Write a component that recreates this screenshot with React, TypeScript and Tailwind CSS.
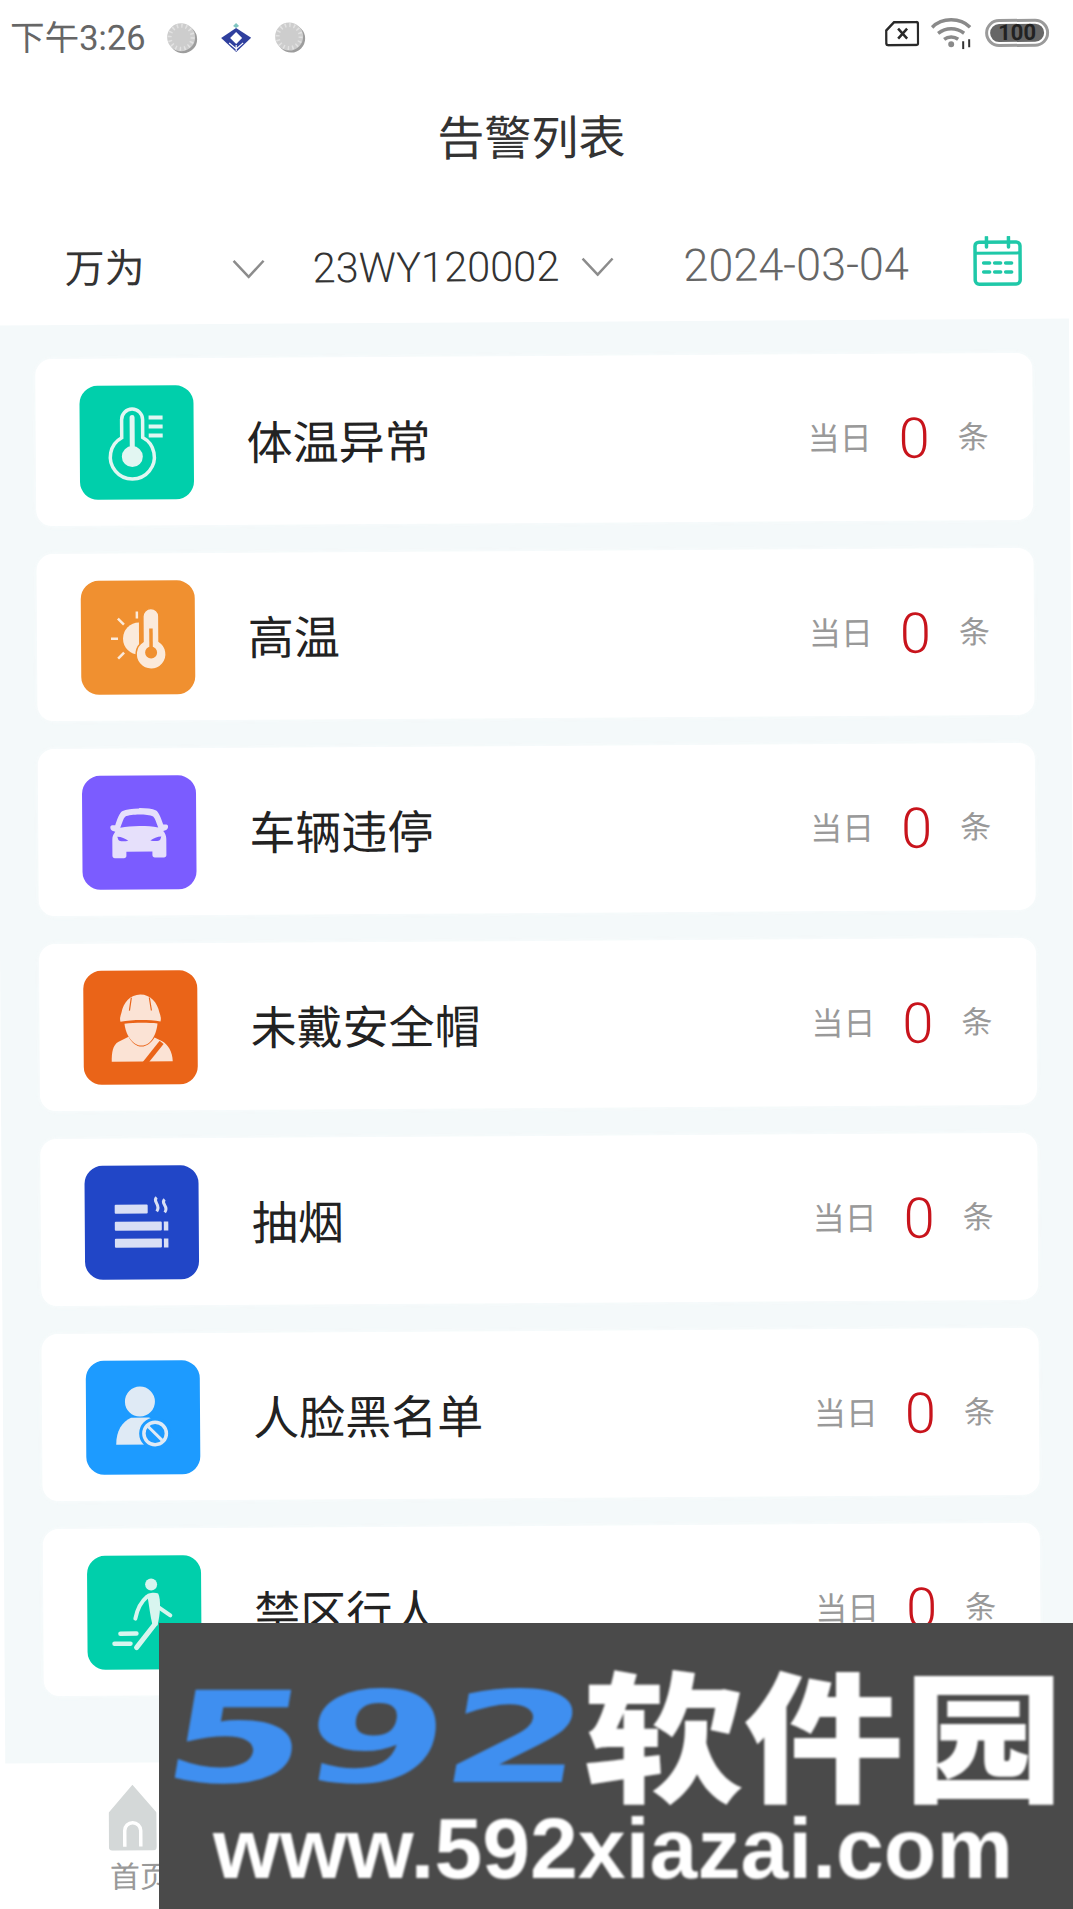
import type { ReactNode } from 'react';

const PALE = '#e2f6f2';

function TempIcon() {
  return (
    <svg viewBox="0 0 114 114" className="h-full w-full" fill="none">
      <path d="M42 52V34a10.500 10.500 0 0 1 21 0v18a22 22 0 1 1-21 0z" stroke={PALE} strokeWidth="3.500" />
      <path d="M52.500 32v34" stroke={PALE} strokeWidth="5" strokeLinecap="round" />
      <circle cx="52.500" cy="71" r="10.500" fill={PALE} />
      <path d="M69 32h14M69 41h14M69 50h14" stroke={PALE} strokeWidth="4" />
    </svg>
  );
}

function HeatIcon() {
  const c = '#fbeadb';
  return (
    <svg viewBox="0 0 114 114" className="h-full w-full" fill="none">
      <path d="M58 42a16 16 0 0 0 0 32z" fill={c} />
      <path d="M56 31v7M37 38l6 6M30 58h7M37 78l6-6" stroke={c} strokeWidth="2.500" />
      <path d="M62 36a8 8 0 0 1 16 0v25a15 15 0 1 1-16 0z" fill={c} stroke="#f09030" strokeWidth="1.500" />
      <path d="M70 48v22" stroke="#f09030" strokeWidth="3.500" />
      <circle cx="70" cy="72" r="6" fill="#f09030" />
    </svg>
  );
}

function CarIcon() {
  const bg = '#7b5cff';
  return (
    <svg viewBox="0 0 114 114" className="h-full w-full">
      <path
        d="M57 33c-7 0-13 .7-17 2.500-2.500 1.500-5 8-7 14h-3c-2.500 0-2.500 4 0 5.500l3 1c-2 2.500-3 5-3 8v16c0 1.500 1 2.500 2.500 2.500h9c1.500 0 2.500-1 2.500-2.500V76h26v3.500c0 1.500 1 2.500 2.500 2.500h9c1.500 0 2.500-1 2.500-2.500v-16c0-3-1-5.500-3-8l3-1c2.500-1.500 2.500-5.500 0-5.500h-3c-2-6-4.500-12.500-7-14-4-1.800-10-2.500-17-2.500z"
        fill="#e6e0fb"
      />
      <path d="M38 52c2-5 3-9 5-11 3-1.500 9-2 14-2s11 .5 14 2c2 2 3 6 5 11-6-1-12-1.500-19-1.500s-13 .5-19 1.500z" fill={bg} />
      <path d="M35 61c4 0 8 2 11 4-4 1-9 1-10-1zM79 61c-4 0-8 2-11 4 4 1 9 1 10-1z" fill={bg} />
    </svg>
  );
}

function HelmetIcon() {
  const c = '#fbe3d5';
  const bg = '#ea6418';
  return (
    <svg viewBox="0 0 114 114" className="h-full w-full">
      <path d="M37 51c-1-3 0-6 1-9 2-10 9-18 19-18s17 8 19 18c1 3 2 6 1 9-12-2-28-2-40 0z" fill={c} />
      <path d="M48 27l-2 13M66 27l2 13" stroke={bg} strokeWidth="1.200" fill="none" />
      <path d="M41 53c10-1 23-1 33 0-1 11-7 22-16 22s-16-11-17-22z" fill={c} />
      <path d="M28 91c0-9 1-17 7-20l10-5c3 6 8 10 13 10 5 0 10-4 13-9l8 4c5 3 10 10 10 20z" fill={c} />
      <path d="M61 93l17-21" stroke={bg} strokeWidth="5" />
    </svg>
  );
}

function SmokeIcon() {
  const c = '#d9dff5';
  return (
    <svg viewBox="0 0 114 114" className="h-full w-full">
      <rect x="30" y="39" width="33" height="9" rx="1" fill={c} />
      <rect x="30" y="56" width="47" height="9" rx="1" fill={c} />
      <rect x="79" y="56" width="4.500" height="9" fill={c} />
      <rect x="30" y="73" width="47" height="9" rx="1" fill={c} />
      <rect x="79" y="73" width="4.500" height="9" fill={c} />
      <path d="M72 32c-5 4 5 7 0 14M80 34c-5 4 5 7 0 13" stroke={c} strokeWidth="3" fill="none" />
    </svg>
  );
}

function BlacklistIcon() {
  const c = '#dfeaf5';
  const bg = '#1d9bff';
  return (
    <svg viewBox="0 0 114 114" className="h-full w-full">
      <circle cx="54" cy="41" r="15" fill={c} />
      <path d="M30 84c0-14 6-23 15-27h18c8 3 13 9 15 17l-8 10z" fill={c} />
      <circle cx="69" cy="73" r="16" fill={bg} />
      <circle cx="69" cy="73" r="13" fill={c} />
      <circle cx="69" cy="73" r="9.500" fill={bg} />
      <path d="M62 66l14 14" stroke={c} strokeWidth="3" />
    </svg>
  );
}

function WalkIcon() {
  const c = '#d8f5ef';
  return (
    <svg viewBox="0 0 114 114" className="h-full w-full" fill="none">
      <circle cx="64" cy="29" r="6" fill={c} />
      <path d="M60 39c-1-1 7-3 11-1 3 6 2 22-1 32l-5-1c-2-8-3-18-5-30z" fill={c} />
      <path d="M60 41c-6 5-10 12-12 22" stroke={c} strokeWidth="4" strokeLinecap="round" />
      <path d="M70 51l13 9" stroke={c} strokeWidth="4" strokeLinecap="round" />
      <path d="M68 68L49 92" stroke={c} strokeWidth="5" strokeLinecap="round" />
      <path d="M33 78h16M27 88h16" stroke={c} strokeWidth="4.500" strokeLinecap="round" />
    </svg>
  );
}

const rows: { title: string; color: string; icon: ReactNode }[] = [
  { title: '体温异常', color: 'bg-[#00cfab]', icon: <TempIcon /> },
  { title: '高温', color: 'bg-[#f09030]', icon: <HeatIcon /> },
  { title: '车辆违停', color: 'bg-[#7b5cff]', icon: <CarIcon /> },
  { title: '未戴安全帽', color: 'bg-[#ea6418]', icon: <HelmetIcon /> },
  { title: '抽烟', color: 'bg-[#2146c7]', icon: <SmokeIcon /> },
  { title: '人脸黑名单', color: 'bg-[#1d9bff]', icon: <BlacklistIcon /> },
  { title: '禁区行人', color: 'bg-[#00cfab]', icon: <WalkIcon /> },
];

function Coin() {
  return (
    <svg viewBox="0 0 32 32" className="h-[32px] w-[32px]" fill="none">
      <circle cx="17" cy="17" r="14" fill="#9c9c9c" />
      <circle cx="15" cy="15" r="14" fill="#cdcdcd" />
      <circle cx="15" cy="15" r="11.500" stroke="#e2e2e2" strokeWidth="4" strokeDasharray="1.500 3" />
    </svg>
  );
}

function StatusBar() {
  return (
    <div className="flex h-[72px] items-center pl-[16px] pr-[18px]">
      <span className="text-[34.500px] text-[#666666]">下午3:26</span>
      <div className="ml-[20px] flex items-center gap-[22px]">
        <Coin />
        <svg viewBox="0 0 32 30" className="h-[30px] w-[32px]">
          <path d="M16 0l3 3-3 2-3-2z" fill="#7fc4c0" />
          <path d="M16 5l15 10-15 14L1 15z" fill="#2f3f9e" />
          <path d="M16 9l6 6-6 6-6-6z" fill="#ffffff" />
          <path d="M9 20l7 6 7-6M16 22v6" stroke="#ffffff" strokeWidth="1.200" fill="none" />
        </svg>
        <Coin />
      </div>
      <div className="ml-auto flex items-center gap-[12px]">
        <svg viewBox="0 0 34 26" className="h-[26px] w-[34px]" fill="none">
          <path d="M9 1.500h22a2 2 0 0 1 2 1.500v20a2 2 0 0 1-2 1.500H3a2 2 0 0 1-2-2V10z" stroke="#2a2a2a" strokeWidth="2.500" />
          <path d="M13 8l9 10M22 8l-9 10" stroke="#2a2a2a" strokeWidth="2.500" />
        </svg>
        <svg viewBox="0 0 42 32" className="h-[32px] w-[42px]" fill="none">
          <path d="M1 10c10-10 28-10 38 0M7 16c8-6 18-6 26 0M13 22c4-3 10-3 14 0" stroke="#8a8a8a" strokeWidth="3.500" />
          <circle cx="20" cy="27" r="3" fill="#8a8a8a" />
          <path d="M32 24v8M38 22v8" stroke="#333333" strokeWidth="2" />
        </svg>
        <div className="flex h-[28px] w-[64px] items-center rounded-full border-[3px] border-[#9a9a9a] p-[2px]">
          <div className="flex h-full w-full items-center justify-center rounded-full bg-[#666666] text-[22px] leading-none font-bold text-[#222222]">100</div>
        </div>
      </div>
    </div>
  );
}

function Chevron({ className }: { className: string }) {
  return (
    <svg viewBox="0 0 34 20" className={`h-[20px] w-[34px] ${className}`} fill="none">
      <path d="M2 2l15 16L32 2" stroke="#8c8c8c" strokeWidth="2.500" />
    </svg>
  );
}

function FilterBar() {
  return (
    <div className="flex h-[118px] items-center pt-[8px]">
      <span className="ml-[69px] text-[40px] text-[#333333]">万为</span>
      <Chevron className="ml-[87px]" />
      <span className="ml-[47px] text-[41.600px] font-light text-[#333333]">23WY120002</span>
      <Chevron className="ml-[21px]" />
      <span className="ml-[69px] text-[45px] font-light text-[#666666]">2024-03-04</span>
      <svg viewBox="0 0 50 50" className="-mt-[6px] ml-[64px] h-[50px] w-[50px]" fill="none">
        <rect x="2.500" y="6" width="45" height="42" rx="4" stroke="#1fc8a8" strokeWidth="3.500" />
        <path d="M2.500 17h45" stroke="#1fc8a8" strokeWidth="3" />
        <path d="M14 1v10M36 1v10" stroke="#1fc8a8" strokeWidth="3.500" strokeLinecap="round" />
        <path d="M11 27h6M22 27h6M33 27h6M11 36h6M22 36h6M33 36h6" stroke="#1fc8a8" strokeWidth="3.500" strokeLinecap="round" />
      </svg>
    </div>
  );
}

function AlarmRow({ title, color, icon }: { title: string; color: string; icon: ReactNode }) {
  return (
    <div className="flex h-[167px] items-center rounded-[16px] bg-white pl-[44px] pr-[44px] shadow-[0_0_5px_rgba(250,253,253,0.9)]">
      <div className={`h-[114px] w-[114px] shrink-0 rounded-[18px] ${color}`}>{icon}</div>
      <span className="ml-[53px] mt-[5px] text-[46px] text-[#222222]">{title}</span>
      <span className="ml-auto mt-[3px] text-[32px] text-[#999999]">当日</span>
      <span className="ml-[27px] mt-[3px] text-[56px] leading-none font-light text-[#c8141c]">0</span>
      <span className="ml-[28px] mt-[3px] text-[31px] text-[#999999]">条</span>
    </div>
  );
}

function Watermark() {
  return (
    <div className="absolute bottom-0 right-0 h-[286px] w-[914px] overflow-hidden bg-[#4a4a4a] font-['Liberation_Sans','Noto_Sans_CJK_SC',sans-serif]">
      <div className="flex h-full flex-col blur-[1.200px]">
        <div className="flex h-[190px] items-center pl-[8px] pt-[22px]">
          <span className="-ml-[12px] origin-bottom-left -skew-x-6 scale-x-[1.42] scale-y-[0.88] font-['DejaVu_Sans',sans-serif] text-[144px] leading-none font-bold tracking-[-2px] text-[#3f8ff0]">592</span>
          <span className="ml-[134px] scale-y-[0.88] font-['Noto_Sans_CJK_SC',sans-serif] text-[160px] leading-none font-black text-white">软件园</span>
        </div>
        <div className="-mt-[8px] pl-[54px] text-[86px] leading-none font-semibold text-white">www.592xiazai.com</div>
      </div>
    </div>
  );
}

export default function App() {
  return (
    <div className="relative h-[1909px] w-[1073px] overflow-hidden bg-white font-['Roboto','Noto_Sans_CJK_SC',sans-serif]">
      <div className="-rotate-[0.37deg]">
        <StatusBar />
        <div className="flex h-[132px] items-center justify-center pt-[2px] text-[47px] text-[#333333]">告警列表</div>
        <FilterBar />
        <div className="flex h-[1438px] flex-col gap-[28px] bg-[#f4f9fa] pl-[39px] pr-[37px] pt-[34px]">
          {rows.map((row) => (
            <AlarmRow key={row.title} {...row} />
          ))}
        </div>
        <div className="flex w-[268px] flex-col items-center pt-[22px]">
          <svg viewBox="0 0 48 66" className="-ml-[14px] h-[66px] w-[48px]">
            <path d="M24 0l24 28v34a4 4 0 0 1-4 4H4a4 4 0 0 1-4-4V28z" fill="#d4d8d8" />
            <path d="M16 62V46a8 8 0 0 1 16 0v16" stroke="#ffffff" strokeWidth="3.500" fill="none" />
          </svg>
          <span className="mt-[12px] text-[30px] leading-none text-[#999999]">首页</span>
        </div>
      </div>
      <Watermark />
    </div>
  );
}
